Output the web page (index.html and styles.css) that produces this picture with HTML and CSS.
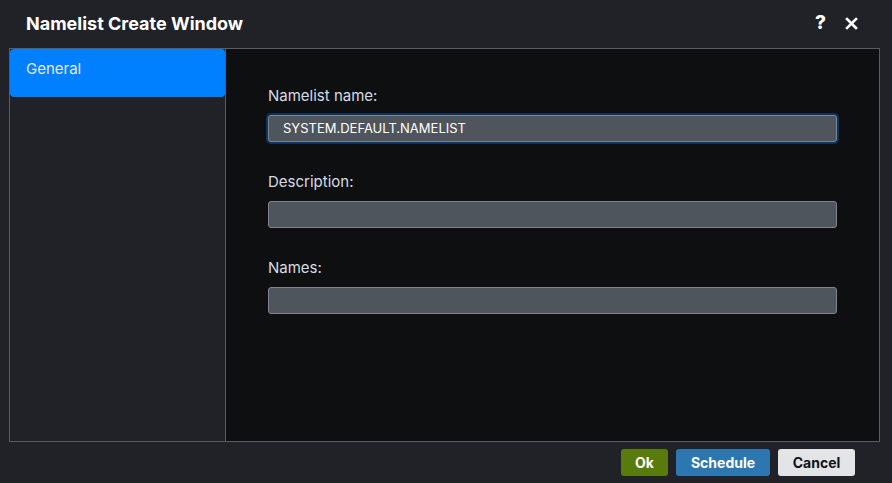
FILE: index.html
```html
<!DOCTYPE html>
<html lang="en">
<head>
<meta charset="utf-8">
<title>Namelist Create Window</title>
<link rel="stylesheet" href="styles.css">
</head>
<body>
<div class="window">
  <header class="titlebar">
    <h1 class="title">Namelist Create Window</h1>
    <div class="title-actions">
      <span class="help">?</span>
      <svg class="close" width="13" height="13" viewBox="0 0 13 13"><path d="M2 2 L11 11 M11 2 L2 11" stroke="#ffffff" stroke-width="2.6" stroke-linecap="square" fill="none"/></svg>
    </div>
  </header>
  <div class="panel">
    <nav class="sidebar">
      <div class="nav-item active">General</div>
    </nav>
    <main class="content">
      <div class="field">
        <label class="label">Namelist name:</label>
        <div class="input focused">SYSTEM.DEFAULT.NAMELIST</div>
      </div>
      <div class="field">
        <label class="label">Description:</label>
        <div class="input"></div>
      </div>
      <div class="field">
        <label class="label">Names:</label>
        <div class="input"></div>
      </div>
    </main>
  </div>
  <footer class="footer">
    <button class="btn btn-ok">Ok</button>
    <button class="btn btn-schedule">Schedule</button>
    <button class="btn btn-cancel">Cancel</button>
  </footer>
</div>
</body>
</html>
```
FILE: styles.css
```css
* { box-sizing: border-box; }
html, body {
  margin: 0;
  padding: 0;
  background: #212227;
  width: 892px;
  height: 483px;
  overflow: hidden;
}
body {
  font-family: Inter, Roboto, "Liberation Sans", sans-serif;
  color: #e6e8ec;
}
.window {
  display: flex;
  flex-direction: column;
  height: 483px;
}
.titlebar {
  height: 48px;
  display: flex;
  align-items: center;
  justify-content: space-between;
  padding: 0 34px 2px 26px;
}
.title {
  margin: 0;
  font-family: Inter, "Liberation Sans", sans-serif;
  font-weight: 700;
  font-size: 18px;
  color: #ffffff;
  letter-spacing: 0;
}
.title-actions {
  display: flex;
  align-items: center;
  gap: 19px;
}
.help {
  font-family: Inter, "Liberation Sans", sans-serif;
  font-weight: 800;
  font-size: 19px;
  color: #ffffff;
  line-height: 20px;
}
.close { display: block; margin-top: 1px; }
.panel {
  margin-left: 9px;
  width: 871px;
  height: 394px;
  border: 1px solid #5b5c62;
  display: flex;
}
.sidebar {
  width: 216px;
  border-right: 1px solid #5b5c62;
  background: #212227;
  flex-shrink: 0;
}
.nav-item {
  height: 48px;
  padding: 10px 16px;
  font-size: 15px;
  line-height: 20px;
  color: #e3e8f0;
}
.nav-item.active {
  background: #0080ff;
  border-radius: 4px;
}
.content {
  flex: 1;
  background: #0e0f11;
  padding: 38px 42px 0 42px;
}
.field + .field { margin-top: 31px; }
.label {
  display: block;
  font-size: 15px;
  line-height: 18px;
  color: #d8dce3;
  margin-bottom: 10px;
}
.input {
  width: 569px;
  height: 27px;
  background: #4f555d;
  border: 1px solid #80858d;
  border-radius: 3px;
  font-size: 13px;
  line-height: 25px;
  padding-left: 14px;
  color: #ffffff;
}
.input.focused {
  box-shadow: 0 0 0 2px #0f3360;
}
.footer {
  display: flex;
  justify-content: flex-end;
  gap: 8px;
  padding: 7px 37px 0 0;
}
.btn {
  height: 27px;
  border: none;
  border-radius: 3px;
  font-family: Inter, "Liberation Sans", sans-serif;
  font-weight: 700;
  font-size: 14px;
  padding: 0 13px;
  cursor: pointer;
}
.btn-ok { background: #587b0c; color: #ffffff; width: 47px; }
.btn-schedule { background: #2d77b0; color: #ffffff; width: 94px; }
.btn-cancel { background: #e3e4e8; color: #111214; width: 77px; }
```
